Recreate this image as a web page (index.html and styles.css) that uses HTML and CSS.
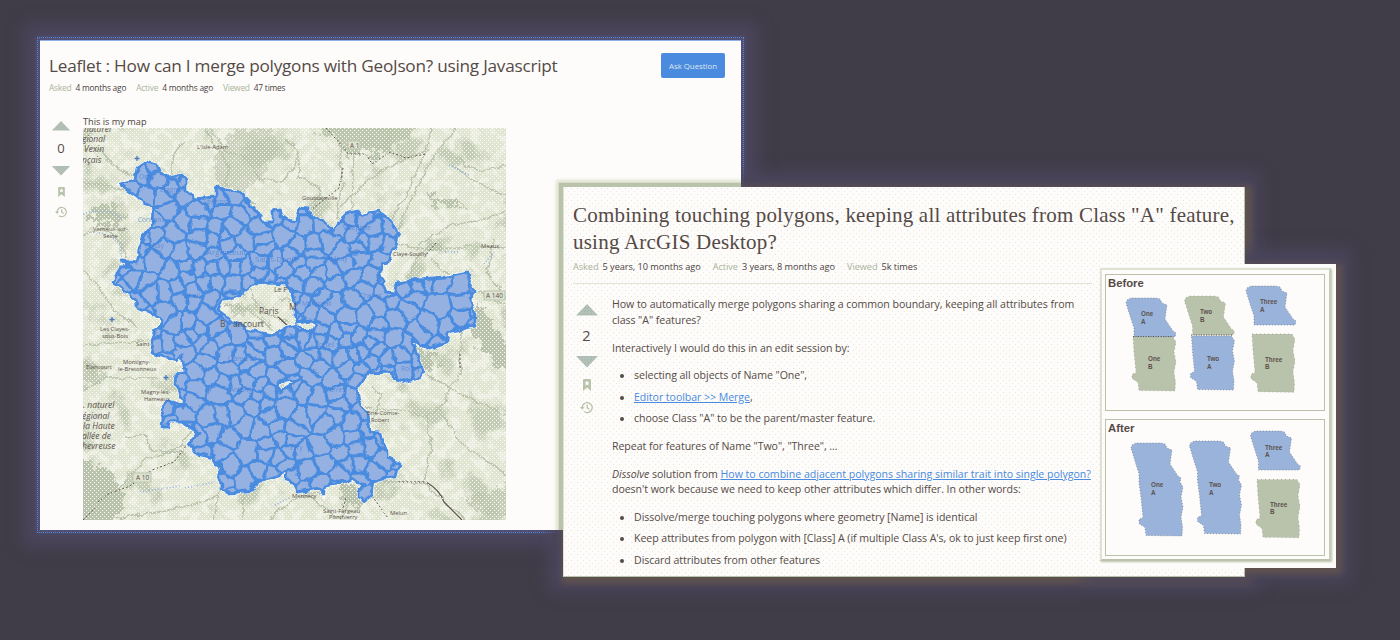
FILE: index.html
```html
<!DOCTYPE html>
<html lang="en">
<head>
<meta charset="utf-8">
<title>Merging polygons</title>
<link rel="stylesheet" href="styles.css">
</head>
<body>
<svg class="defs" width="0" height="0" aria-hidden="true">
  <defs>
    <pattern id="dither" width="3" height="3" patternUnits="userSpaceOnUse"><rect width="3" height="3" fill="#b9c2aa"/><rect width="1" height="1" fill="#8fb0e4"/><rect x="2" y="1" width="1" height="1" fill="#9fb2cc"/></pattern>
    <symbol id="up" viewBox="0 0 22 12"><path d="M11 0 22 11.5H0z" fill="url(#dither)"/></symbol>
    <symbol id="down" viewBox="0 0 22 12"><path d="M0 0H22L11 11.5z" fill="url(#dither)"/></symbol>
    <symbol id="bookmark" viewBox="0 0 8 12"><path d="M1 0h6a1 1 0 0 1 1 1v11L4 8.6 0 12V1a1 1 0 0 1 1-1z" fill="#b9c2aa"/><path d="M4 1.6l.8 1.6 1.7.2-1.2 1.2.3 1.8L4 5.6l-1.6.8.3-1.8-1.2-1.2 1.7-.2z" fill="#fdfcfa"/></symbol>
    <symbol id="history" viewBox="0 0 13 13"><g fill="none" stroke="#b9c2aa" stroke-width="1.3"><path d="M2.2 7A5 5 0 1 1 4.2 10.6"/><path d="M7.2 3.6v3.2l2.2 1.4"/></g><path d="M0 6h4.6L2.3 8.8z" fill="#b9c2aa"/></symbol>
  </defs>
</svg>

<div class="glow glow-left"></div>
<div class="glow glow-right"></div>
<div class="glow glow-figure"></div>

<article class="card card-leaflet">
  <header class="head">
    <h1 class="title-sans">Leaflet : How can I merge polygons with GeoJson? using Javascript</h1>
    <button class="ask">Ask Question</button>
  </header>
  <div class="meta"><span><i>Asked</i>4 months ago</span><span><i>Active</i>4 months ago</span><span><i>Viewed</i>47 times</span></div>
  <div class="body">
    <div class="votes">
      <svg class="arrow"><use href="#up"/></svg>
      <b class="count">0</b>
      <svg class="arrow"><use href="#down"/></svg>
      <svg class="mark"><use href="#bookmark"/></svg>
      <svg class="hist"><use href="#history"/></svg>
    </div>
    <div class="post">
      <p class="intro">This is my map</p>
      <svg class="map" viewBox="83 128 423 392">
        <defs>
          <filter id="woods" x="0" y="0" width="100%" height="100%" color-interpolation-filters="sRGB"><feTurbulence type="fractalNoise" baseFrequency="0.03" numOctaves="5" seed="8"/><feColorMatrix values="0 0 0 0 .75  0 0 0 0 .785  0 0 0 0 .69  7 0 0 0 -4"/></filter>
          <filter id="fields" x="0" y="0" width="100%" height="100%" color-interpolation-filters="sRGB"><feTurbulence type="fractalNoise" baseFrequency="0.1" numOctaves="4" seed="21"/><feColorMatrix values="0 0 0 0 .99  0 0 0 0 .99  0 0 0 0 .97  9 0 0 0 -4.5"/></filter>
          <filter id="rough" x="-5%" y="-5%" width="110%" height="110%"><feTurbulence type="fractalNoise" baseFrequency="0.11" numOctaves="2" seed="4"/><feDisplacementMap in="SourceGraphic" scale="7" xChannelSelector="R" yChannelSelector="G"/></filter>
          <filter id="ragged" x="-5%" y="-5%" width="110%" height="110%" color-interpolation-filters="sRGB"><feTurbulence type="fractalNoise" baseFrequency="0.13" numOctaves="4" seed="9"/><feDisplacementMap in="SourceGraphic" scale="24" xChannelSelector="R" yChannelSelector="G"/></filter>
          <pattern id="grain" width="4" height="4" patternUnits="userSpaceOnUse"><rect width="1" height="1" fill="#fdfcfa"/><rect x="2" y="2" width="1" height="1" fill="#fdfcfa"/></pattern>
          <clipPath id="regionClip"><path id="region" clip-rule="evenodd" d="M120 185 135 180 137 168 146 162 157 165 160 172 167 178 182 175 186 180 186 190 195 199 215 197 215 188 218 185 227 190 240 193 253 207 263 222 273 222 273 210 280 209 283 217 293 222 300 208 308 209 310 215 325 222 333 230 338 222 347 213 360 211 363 215 378 212 388 218 399 234 396 245 390 253 388 263 382 264 380 273 387 292 394 293 397 283 420 280 445 278 457 275 467 273 470 283 474 290 470 300 475 317 475 325 463 328 448 333 447 342 427 349 412 339 417 353 423 370 418 378 405 382 393 378 392 372 368 373 362 382 356 390 358 402 367 415 369 432 380 433 382 443 387 450 387 458 400 464 397 470 395 478 383 479 373 482 371 495 365 501 358 497 358 492 363 485 352 478 343 483 323 487 323 493 320 488 297 492 292 482 286 480 287 472 257 482 253 490 230 493 221 488 219 468 213 457 195 453 189 445 199 433 183 422 170 422 168 427 162 427 163 418 161 410 167 401 183 407 183 400 175 382 176 375 185 372 182 355 177 360 150 353 153 337 161 322 160 318 137 307 136 300 112 281 120 268 128 267 122 260 137 262 140 250 143 237 152 225 153 207 143 203 137 197zM270 282 255 283 240 295 222 300 218 310 227 317 233 323 257 332 273 335 287 327 297 325 305 332 313 333 316 325 312 320 297 322 295 317 295 303 290 292 285 283zM278 382 300 379 287 387 280 392z"/></clipPath>
        </defs>
        <rect x="83" y="128" width="423" height="392" fill="#e0e5d1"/>
        <rect x="83" y="128" width="423" height="392" filter="url(#fields)" opacity=".4"/>
        <rect x="83" y="128" width="423" height="392" filter="url(#woods)" opacity=".85"/>
        <g filter="url(#ragged)" fill="#b9c2aa">
          <path d="M236 128h34l10 14-14 30-22 22-24-8-8-22z" opacity=".6"/>
          <path d="M300 122h118l-12 20-30 6-26 8-20-20z" opacity=".9"/>
          <path d="M92 206q20-10 32 8l-8 12-22-2z"/><path d="M375 160l-8-18 22 4zM425 194l30 6 12 8-34-2z"/>
          <path d="M478 300l40 60-14 12-36-44zM415 350l24-2-4 22-14 2z"/>
          <path d="M78 455l35 18 14 34-22 20H78z"/><path d="M340 482l16 2 4 26-18-8z"/>
          <path d="M84 360l22 10-4 14-19-2zM464 500l50-16v32l-30 0z" opacity=".7"/>
          <path d="M228 304l16-4 6 12-14 4zM256 318l14 4-4 8zM278 290l12 8-6 8z" opacity=".7"/>
        </g>
        <path d="M430 243h12v8h-18z" fill="#b9c2aa"/>
        <g fill="none" stroke="#b9c2aa" stroke-width="1.700" filter="url(#rough)">
          <path d="M211 128l12 22 24 8 12 20 24 4 14-22"/><path d="M344 128l-4 26 3 30-6 34 5 14"/><path d="M354 150l-3 64"/>
          <path d="M433 128l-8 24-18 42-18 30-12 40"/><path d="M456 128l-24 30-20 40-22 50"/><path d="M342 206q30-34 66-48l20-8"/>
          <path d="M83 182l50 10 30-6M83 236q20-14 34 2l12 22M83 270q16 16 28 36l26 22"/><path d="M396 244l36 6 34-4 40 2"/>
          <path d="M415 250q30-30 66-30l25-8M420 252l-12 30M430 258l24 22"/><path d="M455 157l22 14 29-5M450 165l38 24 18 6"/>
          <path d="M494 238l-6 34 18 28M478 290l28 16"/><path d="M367 408q34 2 54 7 22-2 30-28l10-14V330"/><path d="M424 374l30 16 50 24M426 412q6 30 4 42l-6 28 22 22 20 16"/>
          <path d="M440 410l20 32 46 32M372 386l8 10-6 22M380 482h44M310 496l30 24M350 500l-10 20"/>
          <path d="M83 390l24-12h54M84 508l34-18 26-30 36-12 14-24M162 455l30-12M83 520q60-2 112-16l24-8M243 493v27M221 488l-8 32"/>
          <path d="M126 437l20-2 6 16 34 2M83 345l30-2 36-4M270 520q20-24 50-28M185 140q-20 20-10 44M205 128l24 40-6 24 34 12"/>
          <path d="M83 150q20-4 26 12l34 20M285 140q16 8 14 36l20 12-4 22"/>
          <path d="M225 306l24 4 20 18M250 288l8 22 30 12"/>
        </g>
        <path d="M83 214q22-8 38 4M93 232q20 2 28 14v28M185 488l30-6M140 492l40-6M84 420l18-6M275 505l16-8M449 165l20 10M445 252h14M484 264l10-12" fill="none" stroke="#8fafe3" stroke-width="1.6" stroke-dasharray="1 2"/>
        <g fill="none" stroke="#5f5450" stroke-width="1" stroke-dasharray="2 2"><path d="M326 128l18 20 4 6 18 0 6 10 18-12 16 6 20-4M98 502l10-8 22-8 22-16 22-8 12-16M398 482h28M343 168l-4 20-28 22M83 520l12-12M436 243l-10 12M460 354v14M346 498l-4 14M372 496l16 22"/></g>
        <path d="M426 482q14 8 18 20l18 18M278 317l10 9" fill="none" stroke="#5f5450" stroke-width="1.2"/>
        <rect x="83" y="128" width="423" height="392" fill="url(#grain)"/>
        <g filter="url(#rough)">
          <path class="region-halo" fill-rule="evenodd" id="halo"/>
          <g clip-path="url(#regionClip)"><rect x="100" y="150" width="390" height="360" fill="#95b1e2"/><path id="communes" fill="none" stroke="#4a8bdf" stroke-width="2.900" stroke-linejoin="round"/></g>
          <path id="outline" fill="none" stroke="#4a8bdf" stroke-width="2.8" stroke-linejoin="round"/>
        </g>
        <g class="sites">
          <text x="139" y="179">Osny</text><text x="138" y="222">Conflans</text><text x="145" y="248">Poissy</text><text x="207" y="255" font-size="8">Argenteuil</text><text x="255" y="262" font-size="8">Saint-Denis</text><text x="203" y="204">Taverny</text><text x="185" y="298">Rueil</text><text x="160" y="192">Éragny</text><text x="228" y="361">Clamart</text><text x="230" y="392">Antony</text><text x="343" y="230">Villepinte</text><text x="327" y="261">Aulnay</text><text x="360" y="298">Chelles</text><text x="315" y="347">Créteil</text><text x="326" y="392">Yerres</text><text x="401" y="371">Roissy</text><text x="302" y="306">Montreuil</text><text x="290" y="450">Évry</text>
        </g>
        <path d="M137 156v5M134.500 158.500h5M112 317v5M109.500 319.500h5M166 375v5M163.500 377.500h5" stroke="#4a78b8" stroke-width="1.300"/>
        <g class="labels">
          <g class="park"><text x="84" y="132">naturel</text><text x="82" y="142">gional</text><text x="84" y="152">Vexin</text><text x="82" y="163">nçais</text><text x="83" y="408">. naturel</text><text x="82" y="419">égional</text><text x="83" y="429">la Haute</text><text x="82" y="439">allée de</text><text x="82" y="449">hevreuse</text></g>
          <g class="city"><text x="259" y="314">Paris</text><text x="289" y="310">M</text><text x="220" y="327">B</text><text x="233" y="327">ancourt</text><text x="274" y="292" font-size="7">Le P</text></g>
          <g class="town"><text x="197" y="149">L'Isle-Adam</text><text x="302" y="200">Goussainville</text><text x="93" y="231">Verneuil-sur-</text><text x="103" y="238">Seine</text><text x="481" y="248">Meaux</text><text x="393" y="256">Claye-Souilly</text><text x="100" y="331">Les Clayes-</text><text x="102" y="338">sous-Bois</text><text x="136" y="346">Saint-</text><text x="86" y="369">Élancourt</text><text x="123" y="364">Montigny-</text><text x="118" y="371">le-Bretonneux</text><text x="141" y="394">Magny-les-</text><text x="144" y="401">Hameaux</text><text x="367" y="415">Brie-Comte-</text><text x="371" y="422">Robert</text><text x="292" y="498">Mennecy</text><text x="323" y="513">Saint-Fargeau</text><text x="329" y="519">Ponthierry</text><text x="390" y="515">Melun</text></g>
          <g class="road"><rect x="348" y="141" width="12" height="8"/><text x="350" y="148">A 1</text><rect x="484" y="291" width="21" height="9"/><text x="486" y="298">A 140</text><rect x="133" y="473" width="18" height="9"/><text x="136" y="480">A 10</text></g>
        </g>
      </svg>
    </div>
  </div>
  <div class="halo"></div>
</article>

<article class="card card-arcgis">
  <h1 class="title-serif"><span class="t1">Combining touching polygons, keeping all attributes from Class "A" feature,</span><br><span class="t2">using ArcGIS Desktop?</span></h1>
  <div class="meta meta-wide"><span><i>Asked</i>5 years, 10 months ago</span><span><i>Active</i>3 years, 8 months ago</span><span><i>Viewed</i>5k times</span></div>
  <div class="body body-wide">
    <div class="votes votes-wide">
      <svg class="arrow"><use href="#up"/></svg>
      <b class="count">2</b>
      <svg class="arrow"><use href="#down"/></svg>
      <svg class="mark"><use href="#bookmark"/></svg>
      <svg class="hist"><use href="#history"/></svg>
    </div>
    <div class="text">
      <p>How to automatically merge polygons sharing a common boundary, keeping all attributes from<br>class "A" features?</p>
      <p>Interactively I would do this in an edit session by:</p>
      <ul>
        <li>selecting all objects of Name "One",</li>
        <li><a>Editor toolbar &gt;&gt; Merge</a>,</li>
        <li>choose Class "A" to be the parent/master feature.</li>
      </ul>
      <p>Repeat for features of Name "Two", "Three", ...</p>
      <p class="tight"><em>Dissolve</em> solution from <a class="wide">How to combine adjacent polygons sharing similar trait into single polygon?</a><br>doesn't work because we need to keep other attributes which differ. In other words:</p>
      <ul>
        <li>Dissolve/merge touching polygons where geometry [Name] is identical</li>
        <li>Keep attributes from polygon with [Class] A (if multiple Class A's, ok to just keep first one)</li>
        <li>Discard attributes from other features</li>
      </ul>
    </div>
  </div>
</article>

<aside class="figure">
  <div class="frame">
    <section class="pane"><h2>Before</h2>
      <svg viewBox="1106 275 218 135">
        <defs>
          <path id="pA" d="M1126 303l1-3 4-2h25l4 1 2 4 5 2-1 7-1 7 4 6 4 6 3 2-1 4h-41v-9l-3-9z"/>
          <path id="pB" d="M1133 337h40l3 5-2 10 2 10-2 10 1.500 10-.5 9-36-.5-1-8-6-4v-4l4-2-1-10-1-10z"/>
          <path id="pAB" d="M1126 303l1-3 4-2h25l4 1 2 4 5 2-1 7-1 7 4 6 4 6 3 2-1 4 3 5-2 10 2 10-2 10 1.500 10-.5 9-36-.5-1-8-6-4v-4l4-2-1-10-1-10-2-15v-9l-3-9z"/>
        </defs>
        <use href="#pA" class="blue"/><use href="#pB" class="green"/>
        <use href="#pA" x="58.500" y="-2" class="green"/><use href="#pB" x="58.500" y="-1" class="blue"/>
        <use href="#pA" x="120" y="-12" class="blue"/><use href="#pB" transform="translate(119 -30) scale(1 1.080)" class="green"/>
        <path d="M1133 336.500h40M1191 335h42" class="seam"/>
        <g class="tag"><text x="1141" y="316">One</text><text x="1141" y="324">A</text><text x="1148" y="361">One</text><text x="1148" y="369">B</text><text x="1200" y="314">Two</text><text x="1200" y="322">B</text><text x="1207" y="361">Two</text><text x="1207" y="369">A</text><text x="1260" y="304">Three</text><text x="1260" y="312">A</text><text x="1265" y="362">Three</text><text x="1265" y="369">B</text></g>
      </svg>
    </section>
    <section class="pane"><h2>After</h2>
      <svg viewBox="1106 420 218 135">
        <use href="#pAB" x="5" y="145" class="blue"/><use href="#pAB" x="63.500" y="143" class="blue"/>
        <use href="#pA" x="124.500" y="133" class="blue"/><use href="#pB" transform="translate(124 115.500) scale(1 1.080)" class="green"/>
        <g class="tag"><text x="1151" y="487">One</text><text x="1151" y="495">A</text><text x="1209" y="487">Two</text><text x="1209" y="495">A</text><text x="1265" y="450">Three</text><text x="1265" y="457">A</text><text x="1270" y="507">Three</text><text x="1270" y="514">B</text></g>
      </svg>
    </section>
  </div>
</aside>
<script src="map.js"></script>
</body>
</html>
```
FILE: styles.css
```css
* { box-sizing: border-box; }
body { margin: 0; width: 1400px; height: 640px; overflow: hidden; position: relative; background: #403d49; color: #554a46; font-family: "Open Sans", "Noto Sans", sans-serif; }
.defs { position: absolute; }
h1, h2, p, ul { margin: 0; padding: 0; font-weight: 400; }
a { color: #4a8bdf; text-decoration: underline; }
svg { display: block; }

/* windows on the dark desktop */
.glow, .card, .figure { position: absolute; }
.glow { box-shadow: 0 0 5px 3px #5e5259, 0 0 14px 14px #4b465d; }
.glow-left, .card-leaflet { left: 40px; top: 40px; width: 701px; height: 490px; }
.glow-left { box-shadow: 0 0 4px 3px #54517a, 0 0 14px 16px #4b465d; outline: 1px dotted #4a8bdf; outline-offset: 2px; }
.glow-right, .card-arcgis { left: 563px; top: 187px; width: 682px; height: 390px; }
.glow-right { box-shadow: 3px 3px 6px 4px #5f524f, 0 0 14px 14px #4b465d; }
.glow-figure, .figure { left: 1096px; top: 264px; width: 240px; height: 304px; }
.glow-figure { box-shadow: 3px 3px 6px 3px #5f524f, 0 0 14px 14px #4b465d; }
.card { background: #fdfcfa; overflow: hidden; }

.card-leaflet { padding: 0 9px; border-top: 1px solid #8fb0e6; }
.halo { position: absolute; left: 523px; top: 146px; width: 682px; height: 390px; box-shadow: 0 0 1px 4px #b9c2aa, 0 0 3px 7px #dfe3d1; }
.head { display: flex; justify-content: space-between; align-items: flex-start; height: 39px; padding: 12px 7px 0 0; }
.title-sans { font-size: 17.200px; line-height: 26px; letter-spacing: -0.240px; white-space: nowrap; }
.ask { width: 64px; height: 25px; padding: 0; border: 0; border-radius: 2px; background: #4a8bdf; color: #dfe6ee; font: 7.800px "Open Sans", sans-serif; white-space: nowrap; }
.meta { display: flex; gap: 10px; font-size: 8.400px; line-height: 16px; letter-spacing: -0.220px; white-space: nowrap; color: #4b423e; }
.meta i { font-style: normal; color: #a9b39b; margin-right: 4px; }
.body { display: flex; }
.card-leaflet .body { padding-top: 19px; }
.votes { display: flex; flex-direction: column; align-items: center; width: 24px; padding-top: 6px; }
.arrow { width: 20px; height: 10px; }
.count { font-weight: 400; font-size: 13px; line-height: 18px; margin: 8px 0 9px; }
.mark { width: 7px; height: 10px; margin-top: 11px; }
.hist { width: 12px; height: 12px; margin-top: 9px; }
.post { padding-left: 10px; }
.intro { font-size: 9.200px; line-height: 13px; height: 13px; white-space: nowrap; color: #4b423e; }
.map { width: 423px; height: 392px; }
.map text { font-family: "Open Sans", sans-serif; }
.sites { fill: #3f78cc; font-size: 6.500px; opacity: .6; }
.labels { fill: #5b514d; }
.park { font-size: 8.500px; font-style: italic; }
.city { font-size: 8.500px; }
.town { font-size: 5.800px; }
.road { font-size: 6.500px; }
.road rect { fill: #dfe3d1; stroke: #b9c2aa; }
.region-halo { fill: #95b1e2; stroke: #fdfcfa; stroke-width: 4px; }

.card-arcgis { padding: 15px 0 0 10px; border-right: 1px solid #b9c2aa; border-bottom: 1px solid #b9c2aa; border-left: 1px solid #dfe3d1; background-image: radial-gradient(circle at 1.500px 1.500px, #e4e7d6 .7px, transparent .8px), radial-gradient(circle at 4.500px 4.500px, #e8ebdd .7px, transparent .8px); background-size: 6px 6px; }
.title-serif { margin-left: -1px; font-family: "Liberation Serif", serif; font-size: 21px; line-height: 27px; white-space: nowrap; letter-spacing: .220px; }
.meta-wide { gap: 12px; font-size: 9.200px; line-height: 18px; letter-spacing: -0.050px; margin: 2px 0 0 -1px; width: 519px; height: 26px; border-bottom: 1px solid #e0e4d4; }
.body-wide { padding-top: 12px; }
.votes-wide { width: 25px; padding-top: 8px; }
.votes-wide .arrow { width: 22px; height: 12px; }
.votes-wide .count { font-size: 14.500px; line-height: 20px; margin: 10px 0 10px; }
.votes-wide .mark { width: 8px; height: 12px; margin-top: 11px; }
.votes-wide .hist { width: 13px; height: 13px; margin-top: 10px; }
.text { padding-left: 13px; font-size: 10.600px; line-height: 16px; letter-spacing: -0.060px; white-space: nowrap; }
.text p { margin-bottom: 11.500px; }
.text .wide { letter-spacing: -0.020px; }
.text .tight { line-height: 15.500px; margin: 13px 0 11px; }
.text ul { padding-left: 22px; margin-bottom: 11.500px; }
.text li + li { margin-top: 5.500px; }

.figure { padding: 4px 5px 0 4px; z-index: 1; }
.figure::before { content: ""; position: absolute; z-index: -1; left: 5px; top: 0; right: 0; bottom: 0; background: #fdfcfa; }
.frame { display: flex; flex-direction: column; gap: 8px; height: 293px; padding: 4px 4px 0 3px; background: #fdfcfa; border: 2px solid #dfe3d1; border-right-color: #c5ccb8; border-bottom-color: #b9c2aa; box-shadow: 1px 1px 2px #b9c2aa; }
.pane { position: relative; flex: none; height: 137px; border: 1px solid #b9c2aa; }
.pane h2 { position: absolute; left: 2px; top: 2px; font: 700 11.300px/13px "Liberation Sans", sans-serif; }
.pane svg { width: 100%; height: 135px; }
.blue { fill: #9ab3da; stroke: #77818f; stroke-width: .8px; stroke-dasharray: 1px 2px; }
.green { fill: #b9c2aa; stroke: #8d917f; stroke-width: .6px; stroke-dasharray: 1px 3px; }
.seam { stroke: #5b514d; stroke-width: 1px; stroke-dasharray: 1px 1.500px; }
.tag { font: 700 6.300px "Liberation Sans", sans-serif; fill: #5b514d; }
```
FILE: map.js
```javascript
// Fills the region with commune cells: a Voronoi diagram whose cells get larger away from Paris.
const shape = document.getElementById('region').getAttribute('d');
document.getElementById('halo').setAttribute('d', shape);
document.getElementById('outline').setAttribute('d', shape);

let state = 77;
const random = () => (state = (state * 16807) % 2147483647) / 2147483647;
const sites = [];
for (let i = 0; i < 2600; i++) {
  const x = 105 + random() * 380, y = 155 + random() * 355;
  const gap = 5 + Math.hypot(x - 272, y - 308) * 0.032 + random() * 9;
  if (sites.every(s => Math.hypot(s[0] - x, (s[1] - y) * 1.15) > gap)) sites.push([x, y]);
}

function clip(polygon, a, b) {
  const mx = (a[0] + b[0]) / 2, my = (a[1] + b[1]) / 2, nx = b[0] - a[0], ny = b[1] - a[1];
  const side = p => (p[0] - mx) * nx + (p[1] - my) * ny;
  const out = [];
  polygon.forEach((p, i) => {
    const q = polygon[(i + 1) % polygon.length], sp = side(p), sq = side(q);
    if (sp <= 0) out.push(p);
    if (sp * sq < 0) { const t = sp / (sp - sq); out.push([p[0] + (q[0] - p[0]) * t, p[1] + (q[1] - p[1]) * t]); }
  });
  return out;
}

let d = '';
for (const a of sites) {
  let cell = [[90, 140], [500, 140], [500, 520], [90, 520]];
  for (const b of sites) if (a !== b && Math.hypot(a[0] - b[0], a[1] - b[1]) < 70) cell = clip(cell, a, b);
  d += 'M' + cell.map(p => p[0].toFixed(1) + ' ' + p[1].toFixed(1)).join(' ') + 'z';
}
document.getElementById('communes').setAttribute('d', d);
```
